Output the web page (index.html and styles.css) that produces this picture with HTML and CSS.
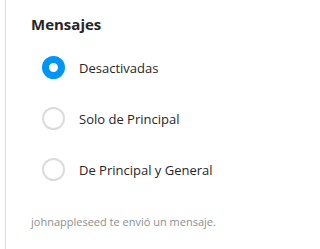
FILE: index.html
```
<!DOCTYPE html>
<html lang="es">
<head>
<meta charset="utf-8">
<link rel="stylesheet" href="styles.css">
</head>
<body>
<div class="panel">
  <h2 class="title">Mensajes</h2>
  <div class="options">
    <label class="option"><span class="radio radio-on"></span><span class="label">Desactivadas</span></label>
    <label class="option"><span class="radio"></span><span class="label">Solo de Principal</span></label>
    <label class="option"><span class="radio"></span><span class="label">De Principal y General</span></label>
  </div>
  <p class="note">johnappleseed te envió un mensaje.</p>
</div>
</body>
</html>
```
FILE: styles.css
```
html, body {
  margin: 0;
  padding: 0;
  background: #ffffff;
}
body {
  font-family: "Open Sans", "Noto Sans", sans-serif;
  color: #262626;
}
.panel {
  margin-left: 5px;
  border-left: 1px solid #dbdbdb;
  height: 249px;
  box-sizing: border-box;
  padding: 14px 0 0 25px;
}
.title {
  margin: 0;
  font-size: 15px;
  font-weight: 700;
  line-height: 20px;
  color: #262626;
}
.options {
  display: flex;
  flex-direction: column;
  padding-left: 11px;
  margin-top: 8px;
}
.option {
  display: flex;
  align-items: center;
  gap: 14px;
  height: 51px;
}
.radio {
  width: 23px;
  height: 23px;
  box-sizing: border-box;
  border-radius: 50%;
  border: 2px solid #dbdbdb;
  flex: none;
}
.radio-on {
  border: 7.5px solid #0095f6;
  background: #ffffff;
}
.label {
  font-size: 13px;
  line-height: 18px;
}
.note {
  margin: 19px 0 0;
  font-size: 11px;
  line-height: 16px;
  color: #8e8e8e;
}
```
